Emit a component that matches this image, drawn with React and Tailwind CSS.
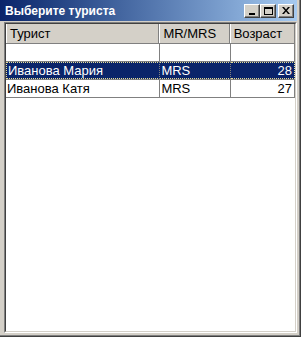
import React from 'react';

const rows = [
  { name: '', title: '', age: '' },
  { name: 'Иванова Мария', title: 'MRS', age: '28', selected: true },
  { name: 'Иванова Катя', title: 'MRS', age: '27' },
];

function TitleButton({ children }) {
  return (
    <div className="w-[16px] h-[14px] bg-[#D4D0C8] border border-t-white border-l-white border-r-[#404040] border-b-[#404040] flex items-center justify-center shadow-[inset_-1px_-1px_0_#808080]">
      {children}
    </div>
  );
}

export default function App() {
  return (
    <div className="w-[301px] h-[337px] bg-[#D4D0C8] flex flex-col overflow-hidden border-r border-b border-r-[#404040] border-b-[#404040] font-['Liberation_Sans',Arial,sans-serif] text-[13px]">
      <div className="w-full h-full flex flex-col border-r border-b border-r-[#808080] border-b-[#808080] pr-[2px] pb-[2px]">
        {/* Заголовок окна */}
        <div className="h-[21px] shrink-0 flex items-center pl-[5px] pr-[3px] bg-gradient-to-r from-[#0A246A] to-[#A6CAF0]">
          <span className="text-white font-bold text-[12px] flex-1">Выберите туриста</span>
          <div className="flex items-center">
            <TitleButton>
              <div className="w-[6px] h-[2px] bg-black mt-[6px]" />
            </TitleButton>
            <TitleButton>
              <div className="w-[9px] h-[8px] border border-black border-t-2" />
            </TitleButton>
            <div className="w-[2px]" />
            <TitleButton>
              <svg width="8" height="7" viewBox="0 0 8 7">
                <path d="M0 0h2l2 2.5L6 0h2L5 3.5 8 7H6L4 4.5 2 7H0l3-3.5z" fill="black" />
              </svg>
            </TitleButton>
          </div>
        </div>

        {/* Таблица */}
        <div className="flex-1 mt-[1px] ml-[4px] flex flex-col border border-t-[#808080] border-l-[#808080] border-r-white border-b-white">
          <div className="flex-1 flex flex-col bg-white border border-t-[#404040] border-l-[#404040] border-r-[#D4D0C8] border-b-[#D4D0C8]">
            <div className="flex h-[20px] bg-[#D4D0C8] border-b border-[#808080]">
              <div className="w-[155px] pl-[3px] flex items-center border-r border-[#808080] border-l border-l-white">Турист</div>
              <div className="w-[71px] pl-[3px] flex items-center border-r border-[#808080] border-l border-l-white">MR/MRS</div>
              <div className="w-[66px] pl-[3px] flex items-center border-r border-[#808080] border-l border-l-white">Возраст</div>
            </div>
            {rows.map((r, i) => (
              <div
                key={i}
                className={
                  'flex h-[18px] border-b border-[#808080] ' +
                  (r.selected ? 'bg-[#0A246A] text-white' : 'text-black')
                }
              >
                <div className={'w-[156px] pl-[1px] flex items-center border-r border-[#808080] ' + (r.selected ? 'border-y border-y-[#E8E09A] border-dotted border-l border-l-[#E8E09A]' : '')}>
                  {r.name}
                </div>
                <div className={'w-[71px] pl-[1px] flex items-center border-r border-[#808080] ' + (r.selected ? 'border-y border-y-[#E8E09A] border-dotted' : '')}>
                  {r.title}
                </div>
                <div className={'w-[65px] pr-[2px] flex items-center justify-end border-r border-[#808080] ' + (r.selected ? 'border-y border-y-[#E8E09A] border-dotted border-r-[#E8E09A]' : '')}>
                  {r.age}
                </div>
              </div>
            ))}
          </div>
        </div>
      </div>
    </div>
  );
}
